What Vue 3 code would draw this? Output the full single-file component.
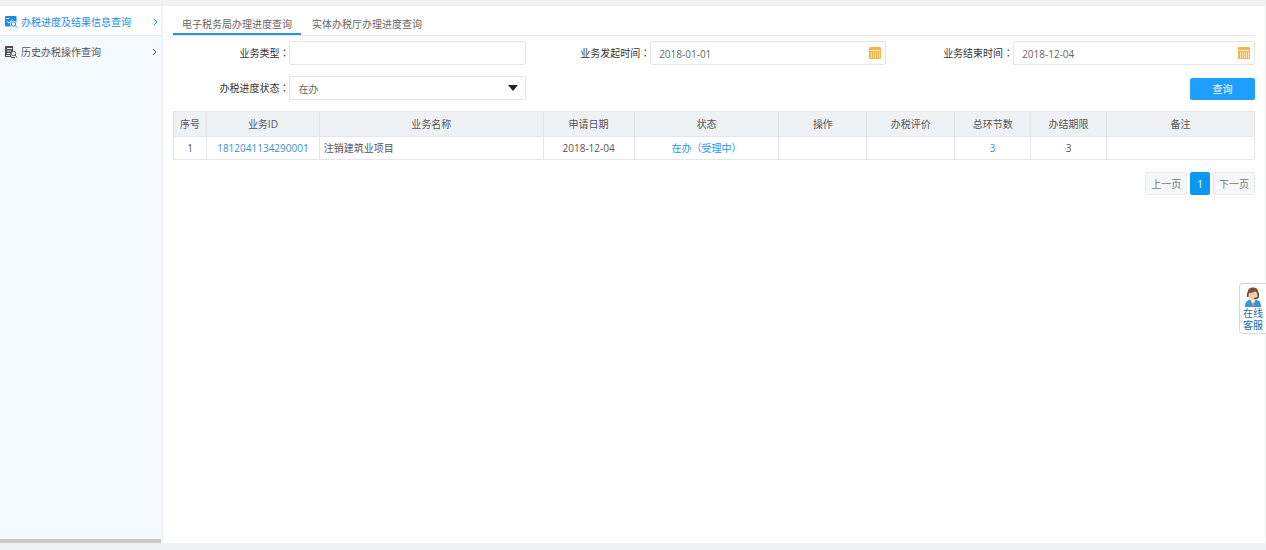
<script setup>
import { ref } from 'vue'

const keyword = ref('')
const startDate = ref('2018-01-01')
const endDate = ref('2018-12-04')
const status = ref('在办')

const columns = [
  { title: '序号', size: 33 },
  { title: '业务ID', size: 113 },
  { title: '业务名称', size: 224 },
  { title: '申请日期', size: 91 },
  { title: '状态', size: 145 },
  { title: '操作', size: 88 },
  { title: '办税评价', size: 88 },
  { title: '总环节数', size: 76 },
  { title: '办结期限', size: 76 },
  { title: '备注', size: 148 }
]
const total = columns.reduce((sum, c) => sum + c.size, 0)
</script>

<template>
  <div class="page">
    <aside class="side">
      <nav>
        <a href="#" class="item active">
          <svg class="item-icon" viewBox="0 0 13 12" aria-hidden="true">
            <path d="M1 0h9.500a1 1 0 0 1 1 1v5.200A3.200 3.200 0 0 0 6 10.500H1a1 1 0 0 1-1-1V1a1 1 0 0 1 1-1z" fill="#1a8ce8" />
            <path d="M1 2.500h3M2 5l2 2L7.500 3.500" fill="none" stroke="#fff" />
            <circle cx="8.500" cy="8" r="2.200" fill="#fff" stroke="#1a8ce8" />
            <path d="M10.200 9.700l2 2" stroke="#1a8ce8" />
          </svg>
          <span>办税进度及结果信息查询</span>
          <svg class="arrow" viewBox="0 0 5 8" aria-hidden="true"><path d="M1 1l3 3-3 3" fill="none" stroke="currentColor" /></svg>
        </a>
        <a href="#" class="item">
          <svg class="item-icon" viewBox="0 0 13 12" aria-hidden="true">
            <path d="M0 0h8v5.500L5.500 8l1 3H0z" fill="#505050" />
            <path d="M2 2.500h5M2 5h4M2 7.500h3M1 9.500h4" stroke="#eee" />
            <circle cx="8.500" cy="7.500" r="2.200" fill="#fff" stroke="#505050" />
            <path d="M10 9l2.200 2.500M6 11.500h4" stroke="#505050" />
          </svg>
          <span>历史办税操作查询</span>
          <svg class="arrow" viewBox="0 0 5 8" aria-hidden="true"><path d="M1 1l3 3-3 3" fill="none" stroke="currentColor" /></svg>
        </a>
      </nav>
      <div class="scroll"></div>
    </aside>

    <main class="main">
      <nav class="tabs">
        <a href="#" class="tab current">电子税务局办理进度查询</a>
        <a href="#" class="tab">实体办税厅办理进度查询</a>
      </nav>

      <form class="form" @submit.prevent>
        <div class="field">
          <label for="type">业务类型<span class="colon">：</span></label>
          <div class="control"><input id="type" v-model="keyword" type="text" /></div>
        </div>
        <div class="field">
          <label for="start">业务发起时间<span class="colon">：</span></label>
          <div class="control">
            <input id="start" v-model="startDate" type="text" />
            <svg class="calendar" viewBox="0 0 12 12" aria-hidden="true">
              <rect width="12" height="12" rx="1" fill="#f9b24a" />
              <path d="M1 3.500h10" stroke="#fff3dc" />
              <path d="M2 5h1v6H2zM4 5h1v6H4zM6 5h1v6H6zM8 5h1v6H8zM10 5h1v6h-1z" fill="#fde3b5" />
            </svg>
          </div>
        </div>
        <div class="field">
          <label for="end">业务结束时间<span class="colon">：</span></label>
          <div class="control">
            <input id="end" v-model="endDate" type="text" />
            <svg class="calendar" viewBox="0 0 12 12" aria-hidden="true">
              <rect width="12" height="12" rx="1" fill="#f9b24a" />
              <path d="M1 3.500h10" stroke="#fff3dc" />
              <path d="M2 5h1v6H2zM4 5h1v6H4zM6 5h1v6H6zM8 5h1v6H8zM10 5h1v6h-1z" fill="#fde3b5" />
            </svg>
          </div>
        </div>
        <div class="field">
          <label for="status">办税进度状态<span class="colon">：</span></label>
          <div class="control">
            <select id="status" v-model="status"><option>在办</option></select>
            <svg class="caret" viewBox="0 0 10 6" aria-hidden="true"><path d="M0 0h10L5 6z" fill="#222" /></svg>
          </div>
        </div>
        <div class="actions"><button type="submit" class="search">查询</button></div>
      </form>

      <table>
        <colgroup>
          <col v-for="c in columns" :key="c.title" :style="{ width: (c.size / total) * 100 + '%' }" />
        </colgroup>
        <thead>
          <tr><th v-for="c in columns" :key="c.title" scope="col">{{ c.title }}</th></tr>
        </thead>
        <tbody>
          <tr>
            <td>1</td>
            <td><a href="#">1812041134290001</a></td>
            <td class="name">注销建筑业项目</td>
            <td>2018-12-04</td>
            <td><a href="#" class="state">在办（受理中）</a></td>
            <td></td>
            <td></td>
            <td><a href="#">3</a></td>
            <td>3</td>
            <td></td>
          </tr>
        </tbody>
      </table>

      <nav class="pager" aria-label="分页">
        <button type="button">上一页</button>
        <button type="button" class="on">1</button>
        <button type="button">下一页</button>
      </nav>
    </main>

    <a href="#" class="service">
      <svg viewBox="0 0 18 20" aria-hidden="true">
        <path d="M1 20c0-5 2-6.500 5-7.500l3 2 3-2c3 1 5 2.500 5 7.500z" fill="#3d91d8" />
        <path d="M6.500 12.500L9 19l2.500-6.500z" fill="#fff" />
        <path d="M8.500 15h1l.6 4H8z" fill="#d9894c" />
        <ellipse cx="9" cy="8" rx="4.500" ry="5.500" fill="#f8cda5" />
        <path d="M4 8C2.500 3 5 .500 9 .500S15.500 3 14 8c-.7-2-1.500-3-3-3.500C9 6 6 5.500 5 6z" fill="#805038" />
        <path d="M3.800 6v4M14.200 6v3.500c0 1.500-1.700 2-4 2" fill="none" stroke="#444" stroke-width="1.500" />
      </svg>
      <span>在线</span>
      <span>客服</span>
    </a>
  </div>
</template>

<style>
body {
  margin: 0;
  background: #f0f1f3;
}
</style>

<style scoped>
.page {
  box-sizing: border-box;
  display: flex;
  min-height: 100vh;
  padding: 6px 1px 7px 0;
  background: #f0f1f3;
  color: #555;
  font: 10px/14px "Open Sans", "Noto Sans CJK SC", sans-serif;
}
a {
  color: #3a8fd0;
  text-decoration: none;
}
input,
select,
button {
  box-sizing: border-box;
  margin: 0;
  font: inherit;
  color: inherit;
}
.side {
  display: flex;
  flex: 0 0 161px;
  flex-direction: column;
  justify-content: space-between;
  margin-right: 2px;
  background: #f5fafe;
}
.item {
  display: flex;
  align-items: center;
  box-sizing: border-box;
  height: 30px;
  padding: 2px 4px 0 5px;
  color: #555;
}
.item.active {
  padding-right: 3px;
  background: #fff;
  border-bottom: 1px solid #e3e8ed;
  color: #1a8ce8;
}
.item-icon {
  width: 13px;
  height: 12px;
  margin-right: 3px;
}
.arrow {
  width: 5px;
  height: 8px;
  margin-left: auto;
}
.scroll {
  height: 4px;
  background: #c8c9cb;
}
.main {
  flex: 1;
  min-width: 0;
  padding: 0 10px;
  background: #fff;
}
.tabs {
  display: flex;
  gap: 2px;
  height: 29px;
  border-bottom: 1px solid #e6e9ec;
}
.tab {
  box-sizing: border-box;
  height: 29px;
  padding: 11px 9px 0;
  color: #666;
}
.tab.current {
  border-bottom: 2px solid #2a90e0;
}
.form {
  display: grid;
  grid-template-columns: 353fr 352fr 361fr;
  gap: 11px 8px;
  padding: 5px 0 11px;
}
.field {
  display: flex;
  align-items: center;
}
label {
  flex: 0 0 33%;
  color: #333;
  text-align: right;
}
.colon {
  font-family: "Noto Sans CJK TC", sans-serif;
}
.control {
  position: relative;
  flex: 1;
  height: 24px;
}
.control input,
.control select {
  display: block;
  width: 100%;
  height: 24px;
  padding: 2px 8px 0;
  border: 1px solid #e2e4e8;
  border-radius: 2px;
  background: #fff;
  color: #666;
  appearance: none;
  outline: none;
}
.calendar {
  position: absolute;
  top: 6px;
  right: 5px;
  width: 12px;
  height: 12px;
}
.caret {
  position: absolute;
  top: 9px;
  right: 8px;
  width: 10px;
  height: 6px;
  pointer-events: none;
}
.actions {
  display: flex;
  grid-column: 3;
  align-items: flex-end;
  justify-content: flex-end;
}
.search {
  width: 65px;
  height: 22px;
  padding: 0;
  border: 0;
  border-radius: 2px;
  background: #1e9fff;
  color: #fff;
}
table {
  width: 100%;
  border-collapse: collapse;
  table-layout: fixed;
}
th,
td {
  height: 22px;
  padding: 0;
  border: 1px solid #e4e6e9;
  font-weight: 400;
  text-align: center;
}
th {
  height: 24px;
  background: #eff2f5;
}
td.name {
  padding-left: 4px;
  text-align: left;
}
.state {
  color: #2a94ea;
}
.pager {
  display: flex;
  gap: 3px;
  justify-content: flex-end;
  margin-top: 12px;
}
.pager button {
  height: 23px;
  padding: 0 5px;
  border: 1px solid #e8e9ec;
  border-radius: 2px;
  background: #f6f7f9;
  color: #777;
}
.pager .on {
  padding: 0 6px;
  border-color: #0b98f5;
  background: #0b98f5;
  color: #fff;
}
.service {
  position: fixed;
  top: 283px;
  right: 0;
  display: flex;
  box-sizing: border-box;
  flex-direction: column;
  align-items: center;
  width: 27px;
  padding: 3px 0 2px;
  border: 1px solid #d3d9e2;
  border-right: 0;
  border-radius: 4px 0 0 4px;
  background: #fff;
  color: #2468b0;
  line-height: 12px;
}
.service svg {
  width: 18px;
  height: 20px;
}
</style>
